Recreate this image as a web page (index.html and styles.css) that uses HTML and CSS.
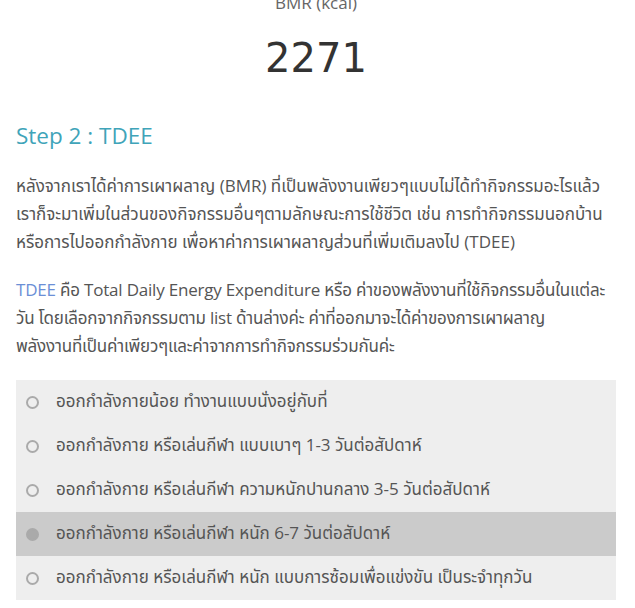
FILE: index.html
```html
<!DOCTYPE html>
<html lang="th">
<head>
    <meta charset="UTF-8">
    <meta name="viewport" content="width=device-width, initial-scale=1.0">
    <title>คำนวณ BMR / TDEE</title>
    <link rel="stylesheet" href="styles.css">
</head>
<body>
    <main class="page">
        <section class="result">
            <p class="result-label">BMR (kcal)</p>
            <p class="result-value">2271</p>
        </section>
        <section class="step">
            <h2 class="step-title">Step 2 : TDEE</h2>
            <p>หลังจากเราได้ค่าการเผาผลาญ (BMR) ที่เป็นพลังงานเพียวๆแบบไม่ได้ทำกิจกรรมอะไรแล้ว<br>เราก็จะมาเพิ่มในส่วนของกิจกรรมอื่นๆตามลักษณะการใช้ชีวิต เช่น การทำกิจกรรมนอกบ้าน<br>หรือการไปออกกำลังกาย เพื่อหาค่าการเผาผลาญส่วนที่เพิ่มเติมลงไป (TDEE)</p>
            <p class="tight"><span class="term">TDEE</span> คือ Total Daily Energy Expenditure หรือ ค่าของพลังงานที่ใช้กิจกรรมอื่นในแต่ละ<br>วัน โดยเลือกจากกิจกรรมตาม list ด้านล่างค่ะ ค่าที่ออกมาจะได้ค่าของการเผาผลาญ<br>พลังงานที่เป็นค่าเพียวๆและค่าจากการทำกิจกรรมร่วมกันค่ะ</p>
            <ul class="activity">
                <li class="activity-item"><span class="radio"></span>ออกกำลังกายน้อย ทำงานแบบนั่งอยู่กับที่</li>
                <li class="activity-item"><span class="radio"></span>ออกกำลังกาย หรือเล่นกีฬา แบบเบาๆ 1-3 วันต่อสัปดาห์</li>
                <li class="activity-item"><span class="radio"></span>ออกกำลังกาย หรือเล่นกีฬา ความหนักปานกลาง 3-5 วันต่อสัปดาห์</li>
                <li class="activity-item selected"><span class="radio"></span>ออกกำลังกาย หรือเล่นกีฬา หนัก 6-7 วันต่อสัปดาห์</li>
                <li class="activity-item"><span class="radio"></span>ออกกำลังกาย หรือเล่นกีฬา หนัก แบบการซ้อมเพื่อแข่งขัน เป็นระจำทุกวัน</li>
            </ul>
        </section>
    </main>
</body>
</html>
```

FILE: styles.css
```css
body {
    margin: 0;
    font-family: 'Open Sans', 'Noto Sans Thai', 'Noto Sans Thai UI', 'Loma', 'Garuda', sans-serif;
    font-size: 17px;
    color: #555;
    background: #fff;
}
.page {
    width: 600px;
    padding: 0 16px;
}
p {
    margin: 0;
}
.result {
    text-align: center;
    margin-top: -9px;
}
.result-label {
    line-height: 24px;
    color: #666;
}
.result-value {
    margin-top: 17px;
    font-family: 'DejaVu Sans', sans-serif;
    font-size: 40px;
    line-height: 53px;
    color: #333;
}
.step-title {
    margin: 35px 0 20px;
    font-size: 22.5px;
    font-weight: 400;
    line-height: 32px;
    color: #3fa4b9;
}
.step p {
    line-height: 28px;
    margin-bottom: 20px;
    white-space: nowrap;
}
.step p.tight {
    letter-spacing: -0.2px;
}
.term {
    color: #6b8fd6;
}
.activity {
    list-style: none;
    margin: 0;
    padding: 0;
    background: #eee;
}
.activity-item {
    display: flex;
    align-items: center;
    gap: 17px;
    height: 44px;
    padding-left: 10px;
    white-space: nowrap;
}
.activity-item.selected {
    background: #cbcbcb;
}
.radio {
    width: 9px;
    height: 9px;
    border: 2px solid #aaa;
    border-radius: 50%;
    box-sizing: content-box;
}
.selected .radio {
    background: #aaa;
}
```
